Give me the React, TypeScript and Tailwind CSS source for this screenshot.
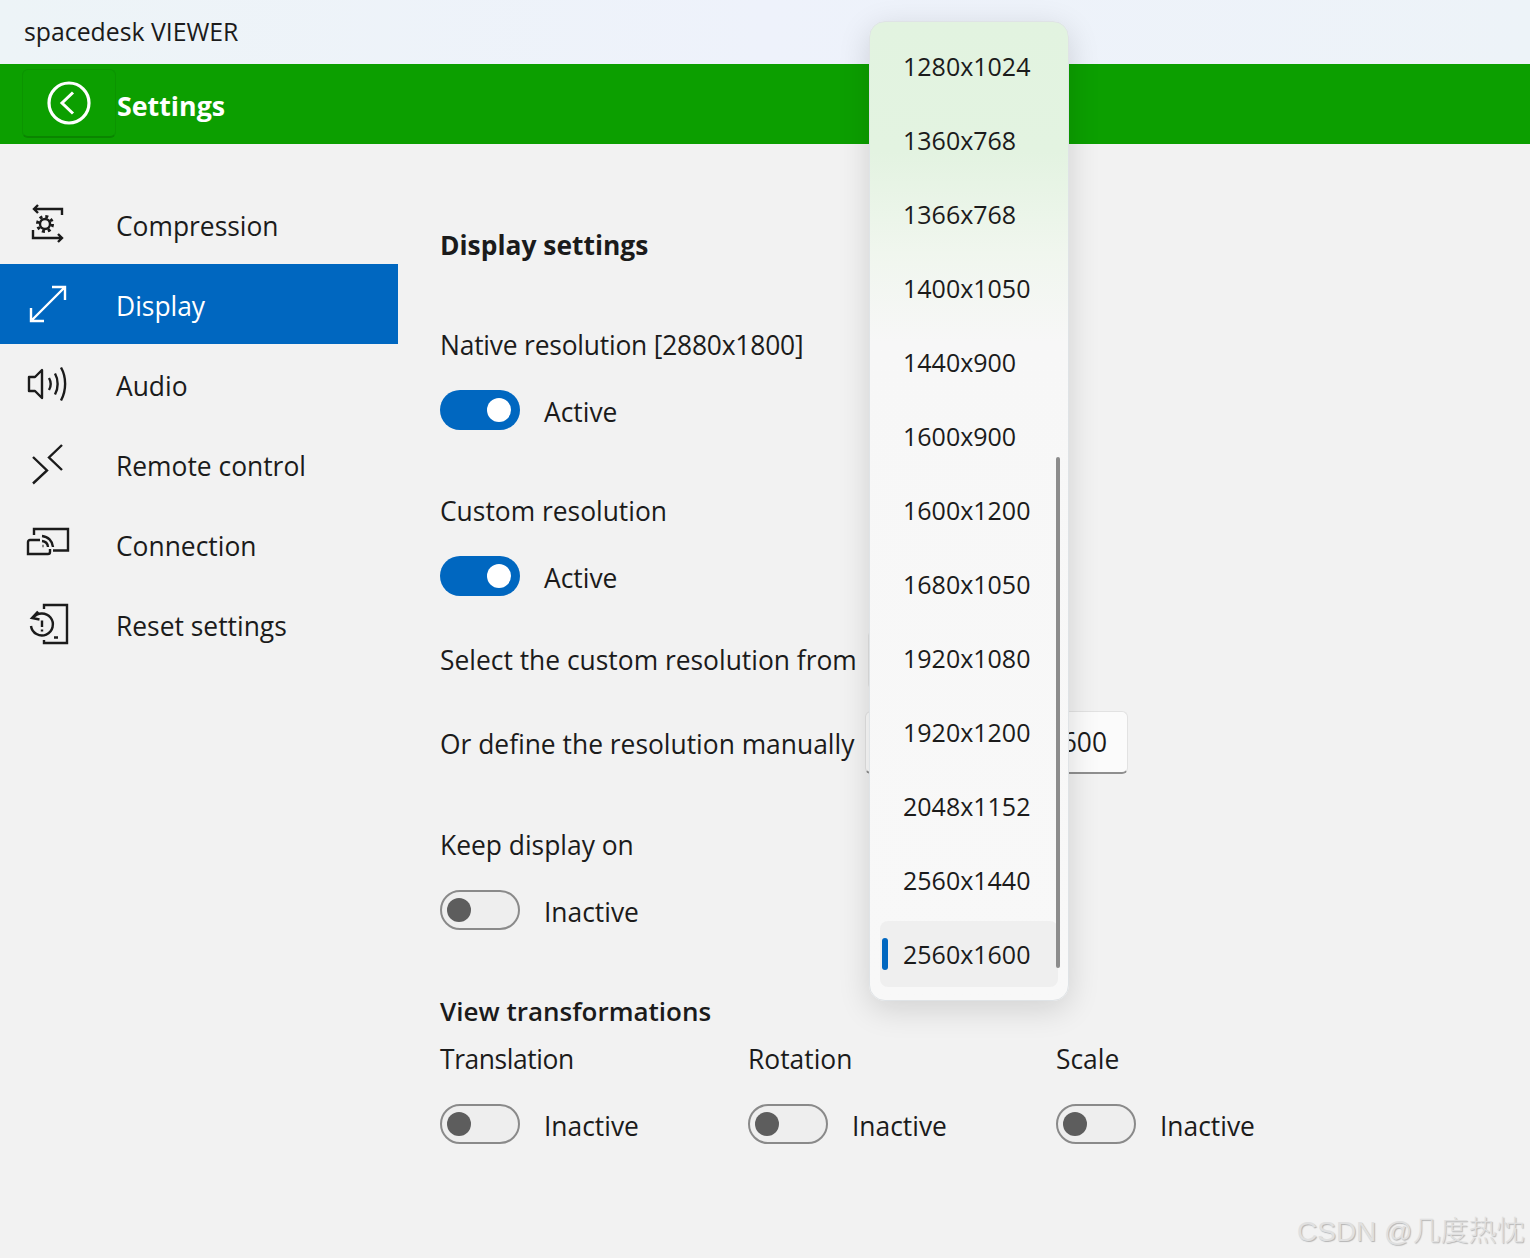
const font = "[font-family:'Open_Sans','Noto_Sans',sans-serif]";

const resolutions = [
  "1280x1024", "1360x768", "1366x768", "1400x1050", "1440x900", "1600x900", "1600x1200",
  "1680x1050", "1920x1080", "1920x1200", "2048x1152", "2560x1440", "2560x1600",
];

function CompressionIcon() {
  return (
    <svg width="48" height="48" viewBox="0 0 48 48" fill="none" stroke="#1b1b1b" strokeWidth="2.400">
      <path d="M11 9h27v6M14 5l-4 4 4 4M9 30v8h28M34 34l4 4-4 4" />
      <circle cx="21" cy="24" r="5" strokeWidth="2.400" />
      <circle cx="21" cy="24" r="7.500" strokeWidth="3" strokeDasharray="3 2.900" />
    </svg>
  );
}

function DisplayIcon() {
  return (
    <svg width="48" height="48" viewBox="0 0 48 48" fill="none" stroke="#ffffff" strokeWidth="2.400">
      <path d="M7 41 41 7M28 7h13v13M7 28v13h13" />
    </svg>
  );
}

function AudioIcon() {
  return (
    <svg width="48" height="48" viewBox="0 0 48 48" fill="none" stroke="#1b1b1b" strokeWidth="2.400">
      <path d="M5 17h6l7-7v28l-7-7H5z" strokeLinejoin="round" />
      <path d="M25 18c2 3.500 2 8.500 0 12M31 13.500c3.500 6 3.500 15 0 21M37 7.500c5.500 9.500 5.500 23 0 33" />
    </svg>
  );
}

function RemoteIcon() {
  return (
    <svg width="48" height="48" viewBox="0 0 48 48" fill="none" stroke="#1b1b1b" strokeWidth="2.400">
      <path d="M9 17 23 30.500 9 43.500M38 5 25 17.500 38 30" />
    </svg>
  );
}

function ConnectionIcon() {
  return (
    <svg width="48" height="48" viewBox="0 0 48 48" fill="none" stroke="#1b1b1b" strokeWidth="2.400">
      <path d="M10 15V9h34v21.500H29" />
      <path d="M16 20H6a2 2 0 0 0-2 2v12h20a2 2 0 0 0 2-2v-3" />
      <path d="M18 16c6 .5 10.500 5 11 11M18 21c3.300.3 5.700 2.700 6 6M18.500 26h1" />
    </svg>
  );
}

function ResetIcon() {
  return (
    <svg width="48" height="48" viewBox="0 0 48 48" fill="none" stroke="#1b1b1b" strokeWidth="2.400">
      <path d="M20 9V5h23v38H20v-3M30 37.500h4" />
      <path d="M9 18a11 11 0 1 1-2 8M14 11.500l-6 6.500 7.500 1.500" />
      <path d="M18 20.500v6.500M18 29.500v2" />
    </svg>
  );
}

function BackIcon() {
  return (
    <svg width="48" height="48" viewBox="0 0 48 48" fill="none" stroke="#ffffff">
      <circle cx="24" cy="24" r="20" strokeWidth="3.200" />
      <path d="M28 13.500 17 24 28 34.500" strokeWidth="3" />
    </svg>
  );
}

function NavItem({ icon, label, active }: { icon: React.ReactNode; label: string; active?: boolean }) {
  return (
    <div className={`flex h-20 items-center pl-6 ${active ? "bg-[#0067c0] text-white" : "text-[#1b1b1b]"}`}>
      <div className="w-[92px]">{icon}</div>
      <span className="translate-y-[2px]">{label}</span>
    </div>
  );
}

function Toggle({ on, label }: { on?: boolean; label: string }) {
  return (
    <div className="flex h-10 items-center gap-6">
      {on ? (
        <div className="flex h-10 w-20 items-center justify-end rounded-full bg-[#0067c0] pr-[9px]">
          <div className="h-6 w-6 rounded-full bg-white" />
        </div>
      ) : (
        <div className="flex h-10 w-20 items-center rounded-full border-2 border-[#8a8a8a] bg-[#eeeeee] pl-[5px]">
          <div className="h-6 w-6 rounded-full bg-[#5d5d5d]" />
        </div>
      )}
      <span className="translate-y-[2px]">{label}</span>
    </div>
  );
}

function Resolutions() {
  return (
    <div className="absolute left-[869px] top-[21px] h-[980px] w-[200px] rounded-2xl border border-[#dfe3e6] bg-[linear-gradient(180deg,#e2f3e0_0px,#e3f3e1_130px,#f0f6ee_230px,#f7f7f7_320px,#f8f8f8_100%)] pt-[7px] text-[25px] shadow-[0_8px_32px_rgba(0,0,0,0.14)]">
      {resolutions.map((r, i) => (
        <div key={r} className="relative flex h-[74px] items-center pl-[33px]">
          {i === resolutions.length - 1 && (
            <>
              <div className="absolute left-[10px] right-[10px] top-1 h-[66px] rounded-lg bg-[#efefef]" />
              <div className="absolute left-[12px] top-[21px] h-8 w-[6px] rounded-full bg-[#0067c0]" />
            </>
          )}
          <span className="relative">{r}</span>
        </div>
      ))}
      <div className="absolute right-2 top-[435px] h-[511px] w-1 rounded-full bg-[#8c8c8c]" />
    </div>
  );
}

export default function App() {
  return (
    <div className={`relative h-[1258px] w-[1530px] overflow-hidden bg-[#f2f2f2] text-[26.4px] leading-10 text-[#1b1b1b] ${font}`}>
      <div className="flex h-16 items-center bg-[linear-gradient(90deg,#edf4f7,#eef2fb_50%,#edf3f8)] pb-[2px] pl-6 text-[24.800px]">
        spacedesk VIEWER
      </div>
      <div className="flex h-20 items-center bg-[#0c9f00] pl-[22px] text-white">
        <div className="flex h-[69px] w-[94px] -translate-y-[1px] items-center justify-center rounded-md border border-[#0b9400] border-b-2 border-b-[#0a8500]">
          <BackIcon />
        </div>
        <span className="translate-x-px translate-y-[2px] text-[26.800px] font-bold">Settings</span>
      </div>
      <div className="flex">
        <div className="w-[398px] pt-10">
          <NavItem icon={<CompressionIcon />} label="Compression" />
          <NavItem icon={<DisplayIcon />} label="Display" active />
          <NavItem icon={<AudioIcon />} label="Audio" />
          <NavItem icon={<RemoteIcon />} label="Remote control" />
          <NavItem icon={<ConnectionIcon />} label="Connection" />
          <NavItem icon={<ResetIcon />} label="Reset settings" />
        </div>
        <div className="pl-[42px]">
          <div className="mt-[81px] font-bold">Display settings</div>
          <div className="mt-[60px] tracking-[-0.2px]">Native resolution [2880x1800]</div>
          <div className="mt-[25px]"><Toggle on label="Active" /></div>
          <div className="mt-[61px]">Custom resolution</div>
          <div className="mt-[25px]"><Toggle on label="Active" /></div>
          <div className="mt-[44px] flex h-10 items-center">
            <span className="w-[428px]">Select the custom resolution from</span>
            <div className="h-[60px] w-[100px] rounded-md border-2 border-[#e2e2e2] bg-[#fbfbfb]" />
          </div>
          <div className="mt-[44px] flex h-10 items-center">
            <span className="w-[425px]">Or define the resolution manually</span>
            <div className="flex h-[63px] w-[263px] -translate-y-[2px] items-center justify-end rounded-md border border-[#e2e2e2] border-b-2 border-b-[#8f8f8f] bg-[#fbfbfb] pr-5">
              1600
            </div>
          </div>
          <div className="mt-[61px]">Keep display on</div>
          <div className="mt-[25px]"><Toggle label="Inactive" /></div>
          <div className="mt-[61px] text-[26px] font-semibold">View transformations</div>
          <div className="mt-2 grid w-[924px] grid-cols-3">
            <div className="tracking-[-0.4px]">Translation</div>
            <div>Rotation</div>
            <div>Scale</div>
          </div>
          <div className="mt-[25px] grid w-[924px] grid-cols-3">
            <Toggle label="Inactive" />
            <Toggle label="Inactive" />
            <Toggle label="Inactive" />
          </div>
        </div>
      </div>
      <Resolutions />
      <div className="absolute left-[1297px] top-[1212px] font-['Liberation_Sans','Noto_Sans_CJK_SC',sans-serif] text-[28px] font-light text-[#e0e0e0] [text-shadow:1px_1px_1px_#b4b4b4]">
        CSDN @几度热忱
      </div>
    </div>
  );
}
